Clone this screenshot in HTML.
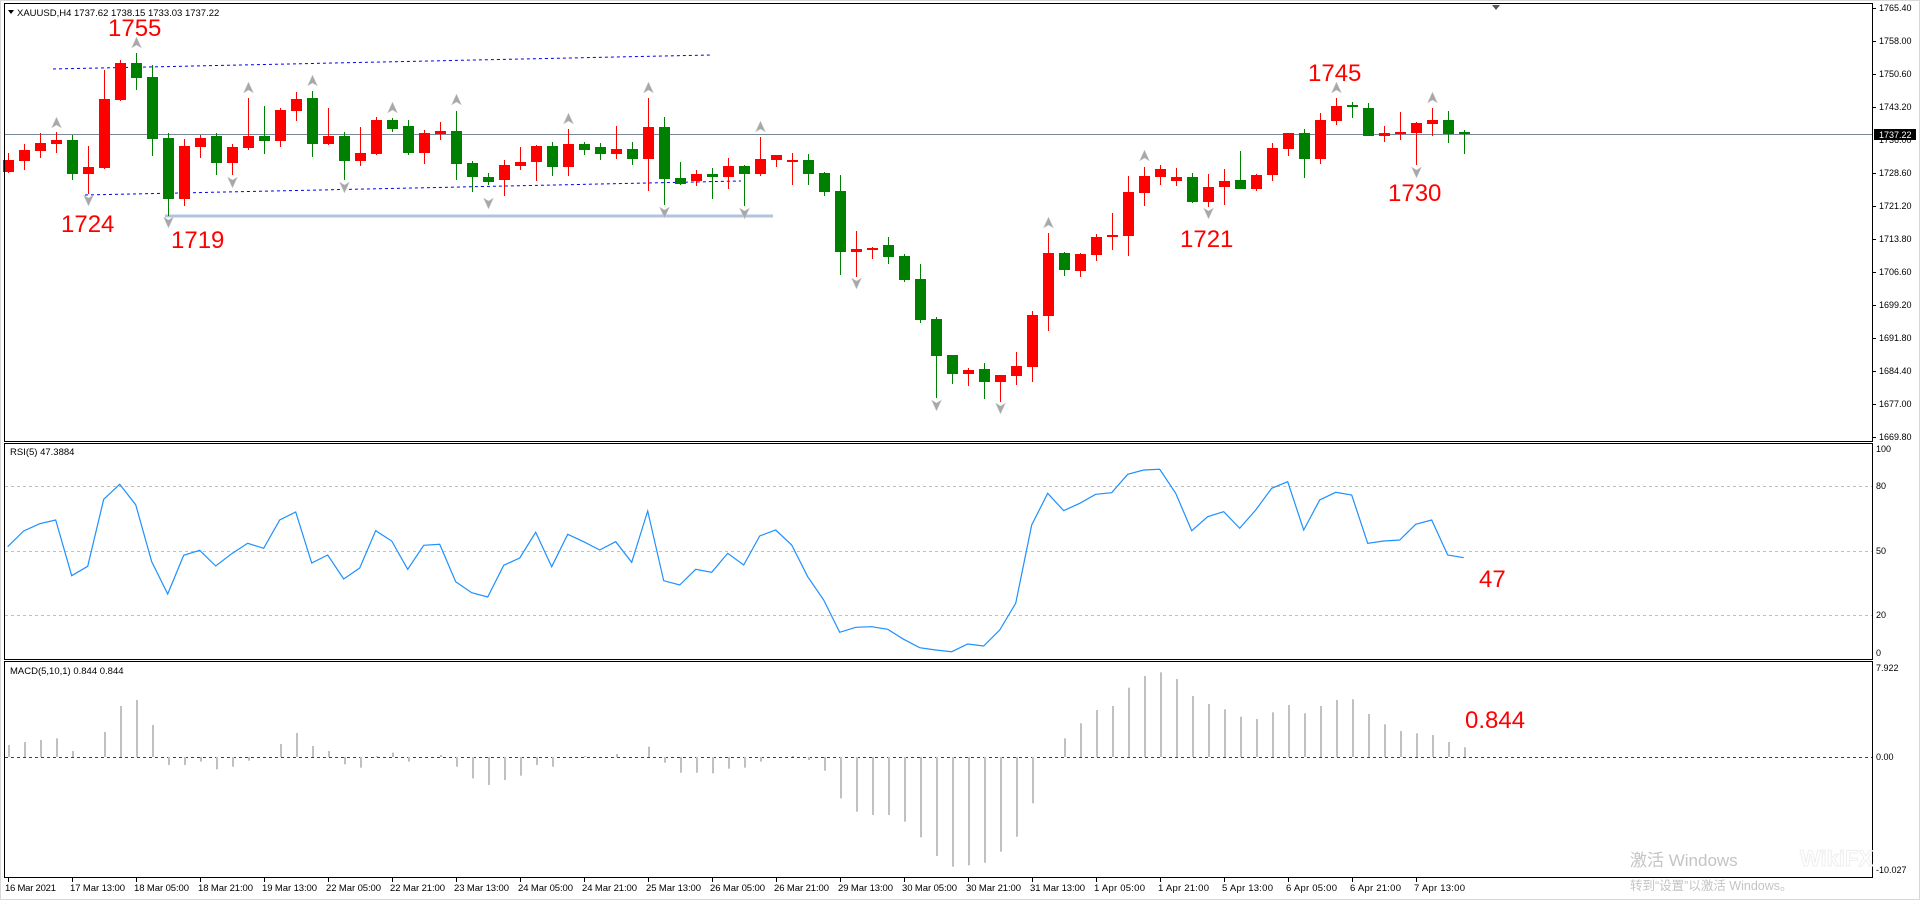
<!DOCTYPE html>
<html><head><meta charset="utf-8"><style>
html,body{margin:0;padding:0;background:#fff;width:1920px;height:900px;overflow:hidden}
svg{display:block}
text{font-family:"Liberation Sans",Tahoma,sans-serif}
</style></head><body>
<svg id="s" width="1920" height="900" viewBox="0 0 1920 900" xmlns="http://www.w3.org/2000/svg">
<rect x="0" y="0" width="1920" height="900" fill="#fff"/>
<rect x="0.5" y="0.5" width="1919" height="899" fill="none" stroke="#d8d8d8"/>
<g stroke="#c0c0c0" stroke-dasharray="3,3" stroke-width="1">
<line x1="5" y1="486.5" x2="1872" y2="486.5"/>
<line x1="5" y1="551.5" x2="1872" y2="551.5"/>
<line x1="5" y1="615.5" x2="1872" y2="615.5"/>
</g>
<line x1="5" y1="757.5" x2="1872" y2="757.5" stroke="#e00000" stroke-dasharray="3,3"/>
<line x1="165" y1="216" x2="773" y2="216" stroke="#b0c4de" stroke-width="3"/>
<line x1="53" y1="69" x2="710" y2="55" stroke="#0000ff" stroke-dasharray="3,3"/>
<line x1="85" y1="195" x2="741" y2="181" stroke="#0000ff" stroke-dasharray="3,3"/>
<line x1="5" y1="134.5" x2="1872" y2="134.5" stroke="#778899"/>
<g id="g"></g>
<g fill="none" stroke="#000">
<rect x="4.5" y="3.5" width="1868" height="438"/>
<rect x="4.5" y="443.5" width="1868" height="216"/>
<rect x="4.5" y="661.5" width="1868" height="216"/>
</g>
<polygon points="8,10 14,10 11,14" fill="#000"/>
<text x="17" y="16" font-size="9.5" fill="#000">XAUUSD,H4  1737.62 1738.15 1733.03 1737.22</text>
<polygon points="1492,5 1500,5 1496,10" fill="#555"/>
<text x="10" y="455" font-size="9.5" fill="#000">RSI(5) 47.3884</text>
<text x="10" y="674" font-size="9.5" fill="#000">MACD(5,10,1) 0.844 0.844</text>
<g fill="#ff0000" font-size="24">
<text x="108" y="36">1755</text>
<text x="61" y="232">1724</text>
<text x="171" y="248">1719</text>
<text x="1308" y="81">1745</text>
<text x="1180" y="247">1721</text>
<text x="1388" y="201">1730</text>
<text x="1479" y="587">47</text>
<text x="1465" y="728">0.844</text>
</g>
<g font-size="9" fill="#000">
<text x="1879" y="11">1765.40</text><text x="1879" y="44">1758.00</text><text x="1879" y="77">1750.60</text><text x="1879" y="110">1743.20</text><text x="1879" y="143">1736.00</text><text x="1879" y="176">1728.60</text><text x="1879" y="209">1721.20</text><text x="1879" y="242">1713.80</text><text x="1879" y="275">1706.60</text><text x="1879" y="308">1699.20</text><text x="1879" y="341">1691.80</text><text x="1879" y="374">1684.40</text><text x="1879" y="407">1677.00</text><text x="1879" y="440">1669.80</text>
<text x="1876" y="452">100</text><text x="1876" y="489">80</text><text x="1876" y="554">50</text><text x="1876" y="618">20</text><text x="1876" y="656">0</text>
<text x="1876" y="671">7.922</text><text x="1876" y="760">0.00</text><text x="1876" y="873">-10.027</text>
</g>
<g stroke="#000"><line x1="1872" y1="8.5" x2="1876" y2="8.5"/><line x1="1872" y1="41.5" x2="1876" y2="41.5"/><line x1="1872" y1="74.5" x2="1876" y2="74.5"/><line x1="1872" y1="107.5" x2="1876" y2="107.5"/><line x1="1872" y1="173.5" x2="1876" y2="173.5"/><line x1="1872" y1="206.5" x2="1876" y2="206.5"/><line x1="1872" y1="239.5" x2="1876" y2="239.5"/><line x1="1872" y1="272.5" x2="1876" y2="272.5"/><line x1="1872" y1="305.5" x2="1876" y2="305.5"/><line x1="1872" y1="338.5" x2="1876" y2="338.5"/><line x1="1872" y1="371.5" x2="1876" y2="371.5"/><line x1="1872" y1="404.5" x2="1876" y2="404.5"/><line x1="1872" y1="437.5" x2="1876" y2="437.5"/></g>
<rect x="1874" y="129" width="42" height="11" fill="#000"/>
<text x="1879" y="138" font-size="9" fill="#fff">1737.22</text>
<g id="t" font-size="9.5" fill="#000"></g>
<text x="1630" y="866" font-size="17" fill="#c4c4c4" font-family="'Liberation Sans','Noto Sans CJK SC',sans-serif">激活 Windows</text>
<text x="1630" y="890" font-size="12.5" fill="#c4c4c4" font-family="'Liberation Sans','Noto Sans CJK SC',sans-serif">转到“设置”以激活 Windows。</text>
<text x="1800" y="866" font-size="22" fill="none" stroke="#eeeeee" stroke-width="1" font-weight="bold">WikiFX</text>
</svg>
<script>
var NS="http://www.w3.org/2000/svg",g=document.getElementById('g');
function el(n,a){var e=document.createElementNS(NS,n);for(var k in a)e.setAttribute(k,a[k]);g.appendChild(e);return e;}
var C=[[160,172,153,173,'r'],[150,161,144,170,'r'],[143,151,133,158,'r'],[140,144,132,153,'r'],[140,174,135,180,'g'],[167,174,146,194,'r'],[99,168,70,169,'r'],[63,100,60,101,'r'],[63,78,53,90,'g'],[77,139,65,156,'g'],[138,199,133,216,'g'],[146,199,139,206,'r'],[138,147,135,158,'r'],[136,163,133,175,'g'],[147,163,144,175,'r'],[136,148,98,150,'r'],[136,141,106,154,'g'],[110,141,108,147,'r'],[99,111,92,121,'r'],[98,144,91,157,'g'],[136,144,108,145,'r'],[136,161,132,180,'g'],[153,161,127,166,'r'],[120,154,117,155,'r'],[120,129,118,132,'g'],[126,153,120,155,'g'],[133,153,130,164,'r'],[131,134,122,140,'r'],[131,164,111,180,'g'],[163,177,161,192,'g'],[177,182,173,185,'g'],[165,180,160,196,'r'],[162,166,147,170,'r'],[146,162,145,181,'r'],[146,167,142,176,'g'],[144,167,129,176,'r'],[144,150,142,155,'g'],[147,154,143,160,'g'],[149,154,126,159,'r'],[149,159,142,165,'g'],[127,159,98,191,'r'],[127,179,117,205,'g'],[178,184,162,185,'g'],[174,181,170,186,'r'],[174,177,168,199,'g'],[166,177,158,189,'r'],[166,174,165,206,'g'],[159,174,137,176,'r'],[155,160,155,167,'r'],[160,162,153,185,'r'],[160,174,154,185,'g'],[173,192,172,196,'g'],[191,252,175,275,'g'],[249,252,231,277,'r'],[248,250,247,259,'r'],[245,257,237,264,'g'],[256,280,254,282,'g'],[279,320,264,323,'g'],[319,356,317,398,'g'],[355,374,355,384,'g'],[370,374,368,386,'r'],[369,382,363,399,'g'],[375,382,375,402,'r'],[366,376,352,385,'r'],[315,367,311,382,'r'],[253,316,233,331,'r'],[253,270,252,276,'g'],[254,271,253,277,'r'],[237,255,234,261,'r'],[235,237,213,250,'r'],[192,236,176,256,'r'],[176,193,167,206,'r'],[169,177,165,185,'r'],[177,181,168,186,'r'],[177,202,173,203,'g'],[187,202,174,207,'r'],[181,187,169,205,'r'],[180,189,151,189,'g'],[175,189,174,191,'r'],[148,175,143,181,'r'],[133,149,133,156,'r'],[133,159,129,178,'g'],[120,159,113,164,'r'],[106,121,98,125,'r'],[105,107,102,118,'g'],[108,136,103,136,'g'],[133,136,126,142,'r'],[132,134,112,140,'r'],[123,133,122,165,'r'],[120,124,108,136,'r'],[120,134,111,143,'g'],[132,134,130,154,'g']];
function X(i){return 7.7+16*i;}
C.forEach(function(c,i){var x=X(i),col=c[4]=='r'?'#ff0000':'#008000';
el('rect',{x:Math.round(x),y:c[2],width:1,height:c[3]-c[2],fill:col});
el('rect',{x:Math.round(x)-5,y:c[0],width:11,height:Math.max(2,c[1]-c[0]),fill:col});});
var up={3:123,8:43,15:88,19:81,24:108,28:100,35:119,40:88,47:127,65:223,71:156,83:88,89:98};
var dn={5:200,10:222,14:182,21:187,30:203,41:212,46:213,53:283,58:405,62:408,75:213,88:172};
for(var k in up){var x=Math.round(X(+k))+0.5,y=up[k];el('polygon',{points:(x)+','+(y-6)+' '+(x+5)+','+(y+5)+' '+x+','+(y+2)+' '+(x-5)+','+(y+5),fill:'#a8a8a8',stroke:'#d0d0d0','stroke-width':0.5});}
for(var k in dn){var x=Math.round(X(+k))+0.5,y=dn[k];el('polygon',{points:(x)+','+(y+6)+' '+(x+5)+','+(y-5)+' '+x+','+(y-2)+' '+(x-5)+','+(y-5),fill:'#a8a8a8',stroke:'#d0d0d0','stroke-width':0.5});}
var R=[350,303,281,270,437,409,208,163,224,395,492,376,361,408,371,340,355,270,246,399,375,447,414,302,333,418,346,343,455,488,501,406,384,307,410,313,335,360,335,397,243,452,465,418,427,370,405,318,300,345,440,510,607,592,590,598,628,653,660,665,642,648,600,520,285,190,242,220,193,188,133,120,118,190,302,260,245,295,240,175,155,300,210,187,195,340,333,330,283,270,375,383];
var p=R.map(function(v,i){return X(i).toFixed(1)+','+(430+v/3).toFixed(1);}).join(' ');
el('polyline',{points:p,fill:'none',stroke:'#1e90ff','stroke-width':1.2});
var M=[945,936,930,925,963,982,906,828,810,885,1005,1005,995,1018,1010,992,982,942,909,948,963,1003,1013,978,968,995,982,975,1010,1045,1065,1050,1037,1005,1010,982,978,982,972,982,950,998,1028,1028,1030,1016,1013,995,980,978,990,1022,1105,1145,1155,1155,1175,1222,1278,1310,1306,1298,1265,1220,1120,982,925,880,840,828,773,738,727,747,798,822,838,860,867,847,825,850,828,810,808,852,883,903,910,915,936,952];
M.forEach(function(v,i){var y=430+v/3,z=757;if(Math.abs(y-z)<1)return;el('rect',{x:Math.round(X(i)),y:Math.min(y,z),width:2,height:Math.abs(y-z),fill:'#c0c0c0'});});
var L=['16 Mar 2021','17 Mar 13:00','18 Mar 05:00','18 Mar 21:00','19 Mar 13:00','22 Mar 05:00','22 Mar 21:00','23 Mar 13:00','24 Mar 05:00','24 Mar 21:00','25 Mar 13:00','26 Mar 05:00','26 Mar 21:00','29 Mar 13:00','30 Mar 05:00','30 Mar 21:00','31 Mar 13:00','1 Apr 05:00','1 Apr 21:00','5 Apr 13:00','6 Apr 05:00','6 Apr 21:00','7 Apr 13:00'];
var t=document.getElementById('t');
L.forEach(function(s,j){var x=Math.round(X(4*j));var tx=document.createElementNS(NS,'text');tx.setAttribute('x',x-3+(j==0?0:1));tx.setAttribute('y',891);tx.setAttribute('textLength',s.length>11?55:51);tx.textContent=s;t.appendChild(tx);
var ln=document.createElementNS(NS,'line');ln.setAttribute('x1',x+0.5);ln.setAttribute('x2',x+0.5);ln.setAttribute('y1',878);ln.setAttribute('y2',882);ln.setAttribute('stroke','#000');t.appendChild(ln);});
</script>
</body></html>
